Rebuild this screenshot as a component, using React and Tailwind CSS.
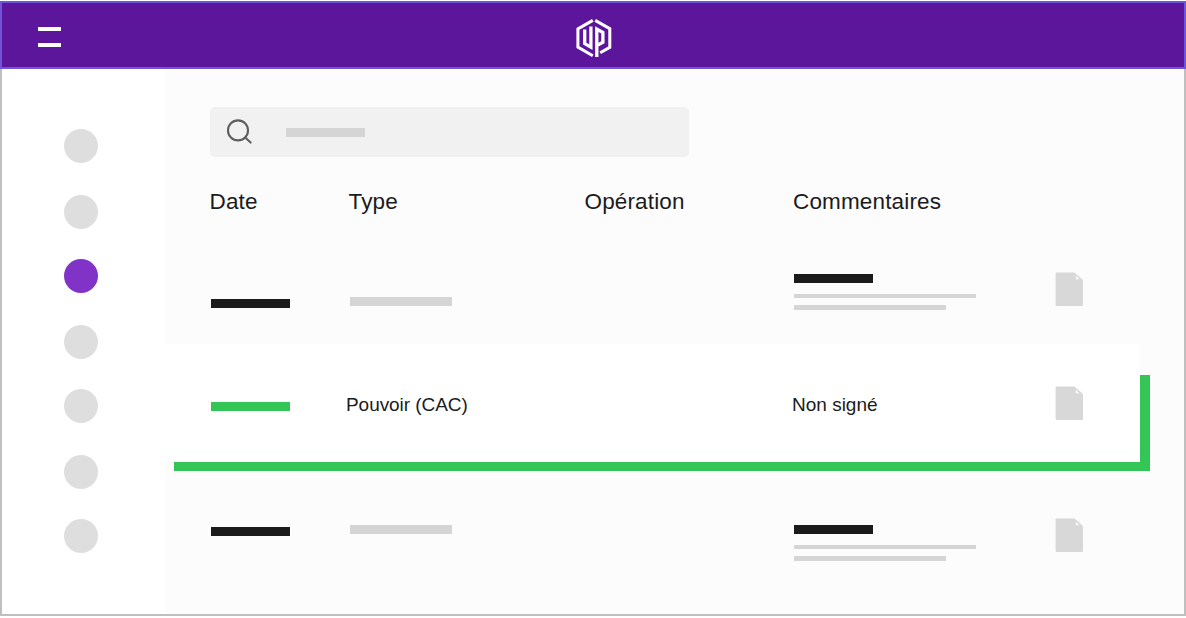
function Logo() {
  return (
    <svg className="h-10 w-9" viewBox="0 0 36 40" fill="none" stroke="#fff" strokeWidth="3">
      <path d="M16.8 2.4 1.9 10.9V29.1L16.8 37.7" />
      <path d="M19.2 2.4 33.8 10.7V29.3L24.2 34.8" />
      <path strokeWidth="3.3" d="M8.7 11.6V25.6L14.9 29.1V8.6" />
      <path strokeWidth="3.3" d="M20.8 39V11L26.9 14.5V24.2L20.8 27.6" />
    </svg>
  );
}

function SearchIcon() {
  return (
    <svg className="h-[27px] w-[27px]" viewBox="0 0 27 27" fill="none" stroke="#5e5e5e" strokeWidth="2.1" strokeLinecap="round">
      <circle cx="12" cy="11.4" r="10" />
      <path d="M19.2 18.6 24.6 23.6" />
    </svg>
  );
}

function DocIcon({ className }) {
  return (
    <svg className={`h-[34px] w-7 ${className}`} viewBox="0 0 28 34">
      <path fill="#d8d8d8" d="M1 0.5H19.5L28 8V32.7A1.2 1.2 0 0 1 26.8 33.9H1.6A1 1 0 0 1 0.6 32.9V1A.8.8 0 0 1 1 .5Z" />
      <path fill="#fcfcfc" d="M20.8 3.8 24.5 7.2H20.8Z" />
    </svg>
  );
}

function PlaceholderRow({ className, dateClass, typeClass, commentClass }) {
  return (
    <div className={`flex items-start pl-[45.5px] ${className}`}>
      <div className={`w-[139.5px] ${dateClass}`}>
        <div className="h-[9px] w-[79px] bg-[#1b1b1b]" />
      </div>
      <div className={`w-[444px] ${typeClass}`}>
        <div className="h-[9px] w-[102px] bg-[#d5d5d5]" />
      </div>
      <div className={`w-[261px] ${commentClass}`}>
        <div className="h-[9px] w-[79px] bg-[#1b1b1b]" />
        <div className="mt-[11px] h-[4px] w-[182px] bg-[#d5d5d5]" />
        <div className="mt-[7px] h-[5px] w-[152px] bg-[#d5d5d5]" />
      </div>
      <DocIcon className="" />
    </div>
  );
}

const steps = [false, false, true, false, false, false, false];

export default function App() {
  return (
    <div className="flex h-[618px] w-[1186px] flex-col bg-white pt-px font-['Liberation_Sans',Arial,sans-serif] text-[#1b1b1b]">
      <header className="relative flex h-[68px] shrink-0 items-center border-2 border-[#7055db] bg-[#5c169b] pl-[35.5px]">
        <button aria-label="Menu" className="flex flex-col gap-[12.5px] pt-1">
          <span className="h-[3.5px] w-[23px] bg-white" />
          <span className="h-[3.5px] w-[23px] bg-white" />
        </button>
        <div className="absolute inset-x-0 top-[15px] flex justify-center pl-[2px]">
          <Logo />
        </div>
      </header>

      <div className="flex h-[547px] w-[1185.5px] border-2 border-t-0 border-[#bfbfbf]">
        <aside className="flex w-[163px] shrink-0 flex-col items-center pt-[59.5px] pr-[5px]">
          {steps.map((active, i) => (
            <span
              key={i}
              className={`size-[34px] shrink-0 rounded-full odd:mb-8 even:mb-[30px] ${active ? "bg-[#8133c7]" : "bg-[#dedede]"}`}
            />
          ))}
        </aside>

        <main className="min-w-0 flex-1 bg-[#fcfcfc] pt-[38px]">
          <div className="ml-[45px] flex h-[50px] w-[479px] items-center rounded-[5px] bg-[#f1f1f1] pl-4">
            <SearchIcon />
            <div className="mt-px ml-[33px] h-[9px] w-[79px] bg-[#d5d5d5]" />
          </div>

          <div className="mt-[28px] flex h-[34px] items-center pl-[44.5px] text-[22.5px] tracking-[0.15px]">
            <div className="w-[139px]">Date</div>
            <div className="w-[236px]">Type</div>
            <div className="w-[208.5px]">Opération</div>
            <div>Commentaires</div>
          </div>

          <PlaceholderRow className="h-[125px] pt-[53px]" dateClass="mt-[27px]" typeClass="mt-[25px]" commentClass="mt-[2px]" />

          <div className="relative h-[127px]">
            <div className="absolute top-[31px] right-[34px] left-[9px] h-[96px] bg-[#33c555]" />
            <div className="relative flex h-[118px] w-[975px] items-start bg-white pl-[45.5px] text-[19px] leading-[24px]">
              <div className="mt-[58px] w-[135.5px]">
                <div className="h-[9px] w-[79px] bg-[#33c555]" />
              </div>
              <div className="mt-[49px] w-[446px] tracking-[-0.05px]">Pouvoir (CAC)</div>
              <div className="mt-[49px] w-[263px]">Non signé</div>
              <DocIcon className="mt-[42px]" />
            </div>
          </div>

          <PlaceholderRow className="pt-[47px]" dateClass="mt-[9px]" typeClass="mt-[7px]" commentClass="mt-[7px]" />
        </main>
      </div>
    </div>
  );
}
